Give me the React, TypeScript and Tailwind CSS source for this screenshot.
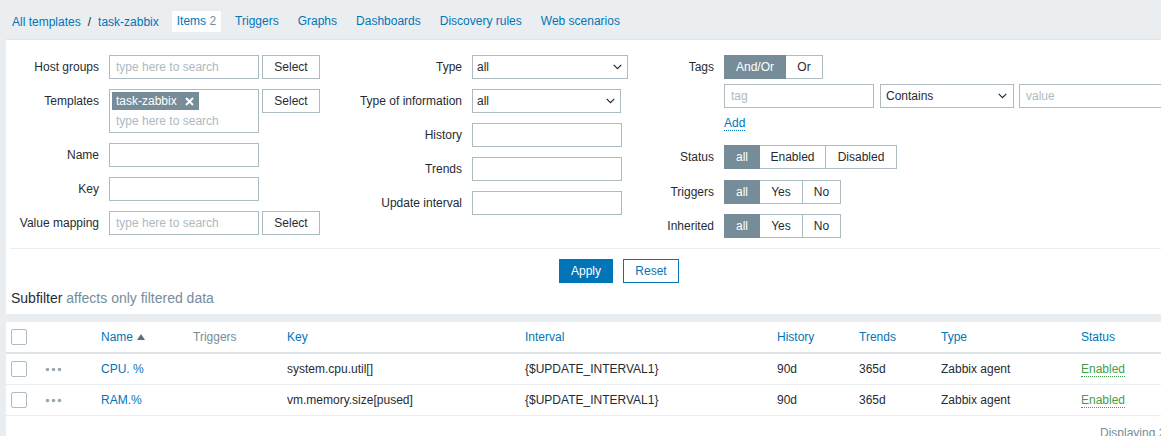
import React from "react";

function Chevron() {
  return (
    <svg width="9" height="6" viewBox="0 0 9 6" className="shrink-0">
      <path d="M0.7 0.8 L4.5 4.6 L8.3 0.8" stroke="#1f2c33" strokeWidth="1.2" fill="none" />
    </svg>
  );
}

function Input({ placeholder = "" }: { placeholder?: string }) {
  return (
    <div className="h-[24px] w-[150px] shrink-0 border border-[#acbbc2] bg-white pl-[6px] leading-[22px] text-[#acbbc2] whitespace-nowrap overflow-hidden">
      {placeholder}
    </div>
  );
}

function SelectBtn() {
  return (
    <div className="ml-[3px] h-[24px] w-[58px] shrink-0 border border-[#acbbc2] bg-white text-center leading-[22px] text-[#1f2c33]">
      Select
    </div>
  );
}

function Seg({ items }: { items: { label: string; w: string }[] }) {
  return (
    <div className="flex h-[24px]">
      {items.map((it, i) => (
        <div
          key={it.label}
          className={`${it.w} h-[24px] leading-[22px] text-center border-y border-r ${i === 0 ? "border-l bg-[#768d99] border-[#768d99] text-white" : "border-[#acbbc2] bg-white text-[#1f2c33]"}`}
        >
          {it.label}
        </div>
      ))}
    </div>
  );
}

function Label({ w, children }: { w: string; children: React.ReactNode }) {
  return <div className={`${w} shrink-0 h-[24px] leading-[24px] text-right whitespace-nowrap`}>{children}</div>;
}

function Dots() {
  return (
    <svg width="17" height="5" viewBox="0 0 17 5">
      <circle cx="2.5" cy="2.5" r="1.8" fill="#9aa8b0" />
      <circle cx="8.5" cy="2.5" r="1.8" fill="#9aa8b0" />
      <circle cx="14.5" cy="2.5" r="1.8" fill="#9aa8b0" />
    </svg>
  );
}

function Checkbox() {
  return <div className="h-[16px] w-[16px] border border-[#acbbc2] rounded-[2px] bg-white" />;
}

const cols = "grid grid-cols-[34px_56px_92px_94px_238px_252px_82px_82px_140px_1fr]";

function Row({ name, keyName }: { name: string; keyName: string }) {
  return (
    <div className={`${cols} h-[31px] items-center border-b border-[#ebeef0]`}>
      <div className="pl-[5px]"><Checkbox /></div>
      <div className="pl-[5px] flex items-center"><Dots /></div>
      <div className="pl-[5px] text-[#0275b8]">{name}</div>
      <div className="pl-[5px]"></div>
      <div className="pl-[5px]">{keyName}</div>
      <div className="pl-[5px]">{"{$UPDATE_INTERVAL1}"}</div>
      <div className="pl-[5px]">90d</div>
      <div className="pl-[5px]">365d</div>
      <div className="pl-[5px]">Zabbix agent</div>
      <div className="pl-[5px]">
        <span className="text-[#429e47] border-b border-dotted border-[#429e47] leading-[13px] inline-block">Enabled</span>
      </div>
    </div>
  );
}

export default function App() {
  const tabs = ["Triggers", "Graphs", "Dashboards", "Discovery rules", "Web scenarios"];
  return (
    <div className="w-[1161px] h-[436px] overflow-hidden bg-[#ebeef0] font-['Liberation_Sans',Arial,sans-serif] text-[12px] text-[#1f2c33]">
      <div className="w-[1238px] h-[436px] flex flex-col">
        {/* navigation */}
        <div className="h-[39px] shrink-0 flex items-start pt-[11px] pl-[12px]">
          <div className="flex items-center h-[21px]">
            <span className="text-[#0275b8]">All templates</span>
            <span className="ml-[7px] mr-[7px] text-[#1f2c33]">/</span>
            <span className="text-[#0275b8]">task-zabbix</span>
          </div>
          <div className="flex ml-[13px] gap-[9px]">
            <div className="h-[21px] leading-[21px] px-[5px] bg-white text-[#0275b8]">
              Items <span className="text-[#768d99]">2</span>
            </div>
            {tabs.map((t) => (
              <div key={t} className="h-[21px] leading-[21px] px-[5px] text-[#0275b8]">
                {t}
              </div>
            ))}
          </div>
        </div>

        {/* filter */}
        <div className="ml-[6px] w-[1226px] shrink-0 bg-white border-t border-[#dfe4e7]">
          <div className="flex items-start pt-[15px] pb-[10px]">
            {/* col 1 */}
            <div className="w-[334px] shrink-0 flex flex-col gap-[10px]">
              <div className="flex gap-[10px]">
                <Label w="w-[93px]">Host groups</Label>
                <div className="flex">
                  <Input placeholder="type here to search" />
                  <SelectBtn />
                </div>
              </div>
              <div className="flex gap-[10px]">
                <Label w="w-[93px]">Templates</Label>
                <div className="flex">
                  <div className="h-[44px] w-[150px] border border-[#acbbc2] bg-white">
                    <div className="mt-[2px] ml-[2px] inline-flex h-[18px] items-center bg-[#768d99] pl-[4px] pr-[5px] text-white">
                      <span className="leading-[18px]">task-zabbix</span>
                      <svg width="9" height="9" viewBox="0 0 9 9" className="ml-[8px]">
                        <path d="M1 1 L8 8 M8 1 L1 8" stroke="#ffffff" strokeWidth="2" />
                      </svg>
                    </div>
                    <div className="pl-[6px] mt-[4px] leading-[14px] text-[#acbbc2]">type here to search</div>
                  </div>
                  <SelectBtn />
                </div>
              </div>
              <div className="flex gap-[10px]">
                <Label w="w-[93px]">Name</Label>
                <Input />
              </div>
              <div className="flex gap-[10px]">
                <Label w="w-[93px]">Key</Label>
                <Input />
              </div>
              <div className="flex gap-[10px]">
                <Label w="w-[93px]">Value mapping</Label>
                <div className="flex">
                  <Input placeholder="type here to search" />
                  <SelectBtn />
                </div>
              </div>
            </div>

            {/* col 2 */}
            <div className="w-[310px] shrink-0 flex flex-col gap-[10px]">
              <div className="flex gap-[10px]">
                <Label w="w-[122px]">Type</Label>
                <div className="h-[24px] w-[156px] border border-[#acbbc2] bg-white pl-[4px] pr-[5px] flex items-center justify-between">
                  <span>all</span>
                  <Chevron />
                </div>
              </div>
              <div className="flex gap-[10px]">
                <Label w="w-[122px]">Type of information</Label>
                <div className="h-[24px] w-[149px] border border-[#acbbc2] bg-white pl-[4px] pr-[5px] flex items-center justify-between">
                  <span>all</span>
                  <Chevron />
                </div>
              </div>
              <div className="flex gap-[10px]">
                <Label w="w-[122px]">History</Label>
                <Input />
              </div>
              <div className="flex gap-[10px]">
                <Label w="w-[122px]">Trends</Label>
                <Input />
              </div>
              <div className="flex gap-[10px]">
                <Label w="w-[122px]">Update interval</Label>
                <Input />
              </div>
            </div>

            {/* col 3 */}
            <div className="flex-1 flex flex-col">
              <div className="flex gap-[10px]">
                <Label w="w-[64px]">Tags</Label>
                <div className="flex flex-col">
                  <Seg items={[{ label: "And/Or", w: "w-[62px]" }, { label: "Or", w: "w-[37px]" }]} />
                  <div className="flex mt-[5px] gap-[5px]">
                    <div className="h-[24px] w-[150px] border border-[#acbbc2] bg-white pl-[6px] leading-[22px] text-[#acbbc2]">tag</div>
                    <div className="ml-[1px] h-[24px] w-[134px] border border-[#acbbc2] bg-white pl-[5px] pr-[6px] flex items-center justify-between">
                      <span>Contains</span>
                      <Chevron />
                    </div>
                    <div className="h-[24px] w-[150px] border border-[#acbbc2] bg-white pl-[6px] leading-[22px] text-[#acbbc2]">value</div>
                  </div>
                  <div className="mt-[6px] h-[16px]">
                    <span className="inline-block leading-[14px] text-[#0275b8] border-b border-dotted border-[#0275b8]">Add</span>
                  </div>
                </div>
              </div>
              <div className="flex gap-[10px] mt-[15px]">
                <Label w="w-[64px]">Status</Label>
                <Seg items={[{ label: "all", w: "w-[36px]" }, { label: "Enabled", w: "w-[66px]" }, { label: "Disabled", w: "w-[71px]" }]} />
              </div>
              <div className="flex gap-[10px] mt-[11px]">
                <Label w="w-[64px]">Triggers</Label>
                <Seg items={[{ label: "all", w: "w-[36px]" }, { label: "Yes", w: "w-[43px]" }, { label: "No", w: "w-[38px]" }]} />
              </div>
              <div className="flex gap-[10px] mt-[10px]">
                <Label w="w-[64px]">Inherited</Label>
                <Seg items={[{ label: "all", w: "w-[36px]" }, { label: "Yes", w: "w-[43px]" }, { label: "No", w: "w-[38px]" }]} />
              </div>
            </div>
          </div>
          <div className="mx-[4px] h-px bg-[#ebeef0]" />
          <div className="flex justify-center gap-[10px] pt-[10px]">
            <div className="h-[24px] w-[54px] bg-[#0275b8] border border-[#0275b8] text-white text-center leading-[22px]">Apply</div>
            <div className="h-[24px] w-[56px] bg-white border border-[#0275b8] text-[#0275b8] text-center leading-[22px]">Reset</div>
          </div>
          <div className="mt-[7px] pb-[8px] pl-[5px] text-[14px] leading-[16px]">
            Subfilter <span className="text-[#768d99]">affects only filtered data</span>
          </div>
        </div>

        {/* table */}
        <div className="mt-[8px] ml-[6px] w-[1226px] flex-1 bg-white">
          <div className={`${cols} h-[32px] items-center border-b-2 border-[#dfe4e7]`}>
            <div className="pl-[5px]"><Checkbox /></div>
            <div />
            <div className="pl-[5px] text-[#0275b8] flex items-center gap-[4px]">
              Name
              <svg width="8" height="6" viewBox="0 0 8 6">
                <path d="M0 6 L4 0 L8 6 Z" fill="#5f6e76" />
              </svg>
            </div>
            <div className="pl-[5px] text-[#768d99]">Triggers</div>
            <div className="pl-[5px] text-[#0275b8]">Key</div>
            <div className="pl-[5px] text-[#0275b8]">Interval</div>
            <div className="pl-[5px] text-[#0275b8]">History</div>
            <div className="pl-[5px] text-[#0275b8]">Trends</div>
            <div className="pl-[5px] text-[#0275b8]">Type</div>
            <div className="pl-[5px] text-[#0275b8]">Status</div>
          </div>
          <Row name="CPU. %" keyName="system.cpu.util[]" />
          <Row name="RAM.%" keyName="vm.memory.size[pused]" />
          <div className="pl-[1094px] pt-[8px] text-[#768d99] whitespace-nowrap">Displaying 2 of 2 found</div>
        </div>
      </div>
    </div>
  );
}
